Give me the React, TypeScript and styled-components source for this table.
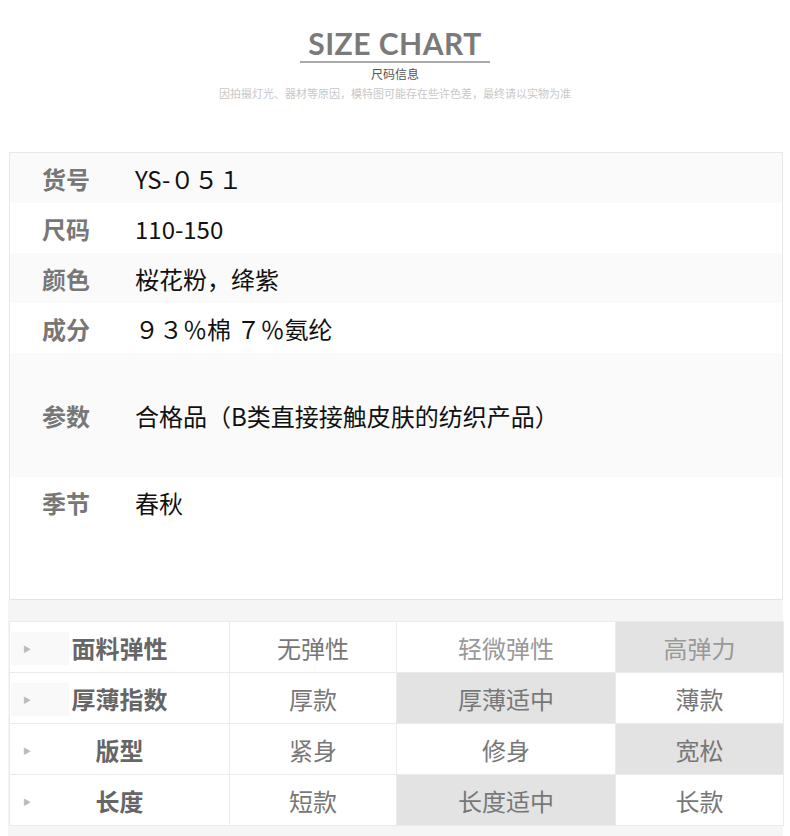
import React from "react";
import styled, { createGlobalStyle } from "styled-components";

const Global = createGlobalStyle`
  html, body { margin: 0; padding: 0; background: #fff; }
  body {
    font-family: "Noto Sans CJK SC", "Noto Sans", sans-serif;
    text-spacing-trim: space-all;
  }
`;

const Page = styled.div`
  width: 790px;
  display: flex;
  flex-direction: column;
`;

const Header = styled.header`
  display: flex;
  flex-direction: column;
  align-items: center;
  padding-top: 27px;
  height: 152px;
  box-sizing: border-box;
`;

const Title = styled.h1`
  margin: 0;
  font-family: Lato, "Open Sans", sans-serif;
  font-weight: 700;
  font-size: 30px;
  line-height: 32px;
  color: #7a7a7a;
  letter-spacing: 0.5px;
  padding: 0 8px 2px;
  border-bottom: 2px solid #aaa;
`;

const SubTitle = styled.div`
  font-size: 12px;
  line-height: 16px;
  color: #555;
  margin-top: 3px;
`;

const Note = styled.div`
  font-size: 11px;
  line-height: 14px;
  color: #c8c8c8;
  margin-top: 4px;
`;

const InfoBox = styled.section`
  margin-left: 9px;
  width: 774px;
  height: 448px;
  box-sizing: border-box;
  border: 1px solid #e8e8e8;
  border-bottom-color: #e4e4e4;
  display: flex;
  flex-direction: column;
`;

const InfoRow = styled.div<{ $shade: boolean; $h: number }>`
  display: flex;
  align-items: center;
  height: ${(p) => p.$h}px;
  background: ${(p) => (p.$shade ? "#fafafa" : "#fff")};
  flex-shrink: 0;
`;

const InfoLabel = styled.div`
  width: 125px;
  padding-left: 32px;
  box-sizing: border-box;
  font-size: 24px;
  font-weight: 700;
  color: #777;
`;

const InfoValue = styled.div`
  font-size: 24px;
  color: #111;
  text-spacing-trim: space-all;
`;

const GrayBand = styled.section`
  margin-left: 8px;
  width: 775px;
  background: #f5f5f5;
  padding: 21px 0 11px 1px;
  box-sizing: border-box;
`;

const Table = styled.table`
  width: 774px;
  border-collapse: collapse;
  background: #fff;
  table-layout: fixed;
`;

const LabelCell = styled.td`
  position: relative;
  height: 50px;
  border: 1px solid #ebebeb;
  text-align: center;
  font-size: 24px;
  font-weight: 700;
  color: #666;
  padding: 0;
`;

const Arrow = styled.span<{ $boxed: boolean }>`
  position: absolute;
  left: 1px;
  top: 10px;
  width: 58px;
  height: 33px;
  display: flex;
  align-items: center;
  padding-left: 12px;
  box-sizing: border-box;
  background: ${(p) => (p.$boxed ? "#f9f9f9" : "transparent")};
  color: #bbb;
  font-size: 8px;
  font-weight: 400;
`;

const ValueCell = styled.td<{ $on: boolean; $light: boolean }>`
  height: 50px;
  border: 1px solid #ebebeb;
  text-align: center;
  font-size: 24px;
  color: ${(p) => (p.$light ? "#999" : "#777")};
  background: ${(p) => (p.$on ? "#e3e3e3" : "#fff")};
  padding: 0;
`;

const info: [string, string, number][] = [
  ["货号", "YS-０５１", 50],
  ["尺码", "110-150", 50],
  ["颜色", "桜花粉，绛紫", 50],
  ["成分", "９３％棉 ７％氨纶", 50],
  ["参数", "合格品（B类直接接触皮肤的纺织产品）", 124],
  ["季节", "春秋", 50],
];

const rows: { label: string; values: string[]; on: number; light?: boolean }[] = [
  { label: "面料弹性", values: ["无弹性", "轻微弹性", "高弹力"], on: 2, light: true },
  { label: "厚薄指数", values: ["厚款", "厚薄适中", "薄款"], on: 1 },
  { label: "版型", values: ["紧身", "修身", "宽松"], on: 2 },
  { label: "长度", values: ["短款", "长度适中", "长款"], on: 1 },
];

export default function App() {
  return (
    <Page>
      <Global />
      <Header>
        <Title>SIZE CHART</Title>
        <SubTitle>尺码信息</SubTitle>
        <Note>因拍摄灯光、器材等原因，模特图可能存在些许色差，最终请以实物为准</Note>
      </Header>
      <InfoBox>
        {info.map(([l, v, h], i) => (
          <InfoRow key={l} $shade={i % 2 === 0} $h={h}>
            <InfoLabel>{l}</InfoLabel>
            <InfoValue>{v}</InfoValue>
          </InfoRow>
        ))}
      </InfoBox>
      <GrayBand>
        <Table>
          <colgroup>
            <col style={{ width: 220 }} />
            <col style={{ width: 167 }} />
            <col style={{ width: 219 }} />
            <col style={{ width: 168 }} />
          </colgroup>
          <tbody>
            {rows.map((r, ri) => (
              <tr key={r.label}>
                <LabelCell>
                  <Arrow $boxed={ri < 2}>▶</Arrow>
                  {r.label}
                </LabelCell>
                {r.values.map((v, vi) => (
                  <ValueCell key={v} $on={vi === r.on} $light={!!r.light && vi > 0}>
                    {v}
                  </ValueCell>
                ))}
              </tr>
            ))}
          </tbody>
        </Table>
      </GrayBand>
    </Page>
  );
}
